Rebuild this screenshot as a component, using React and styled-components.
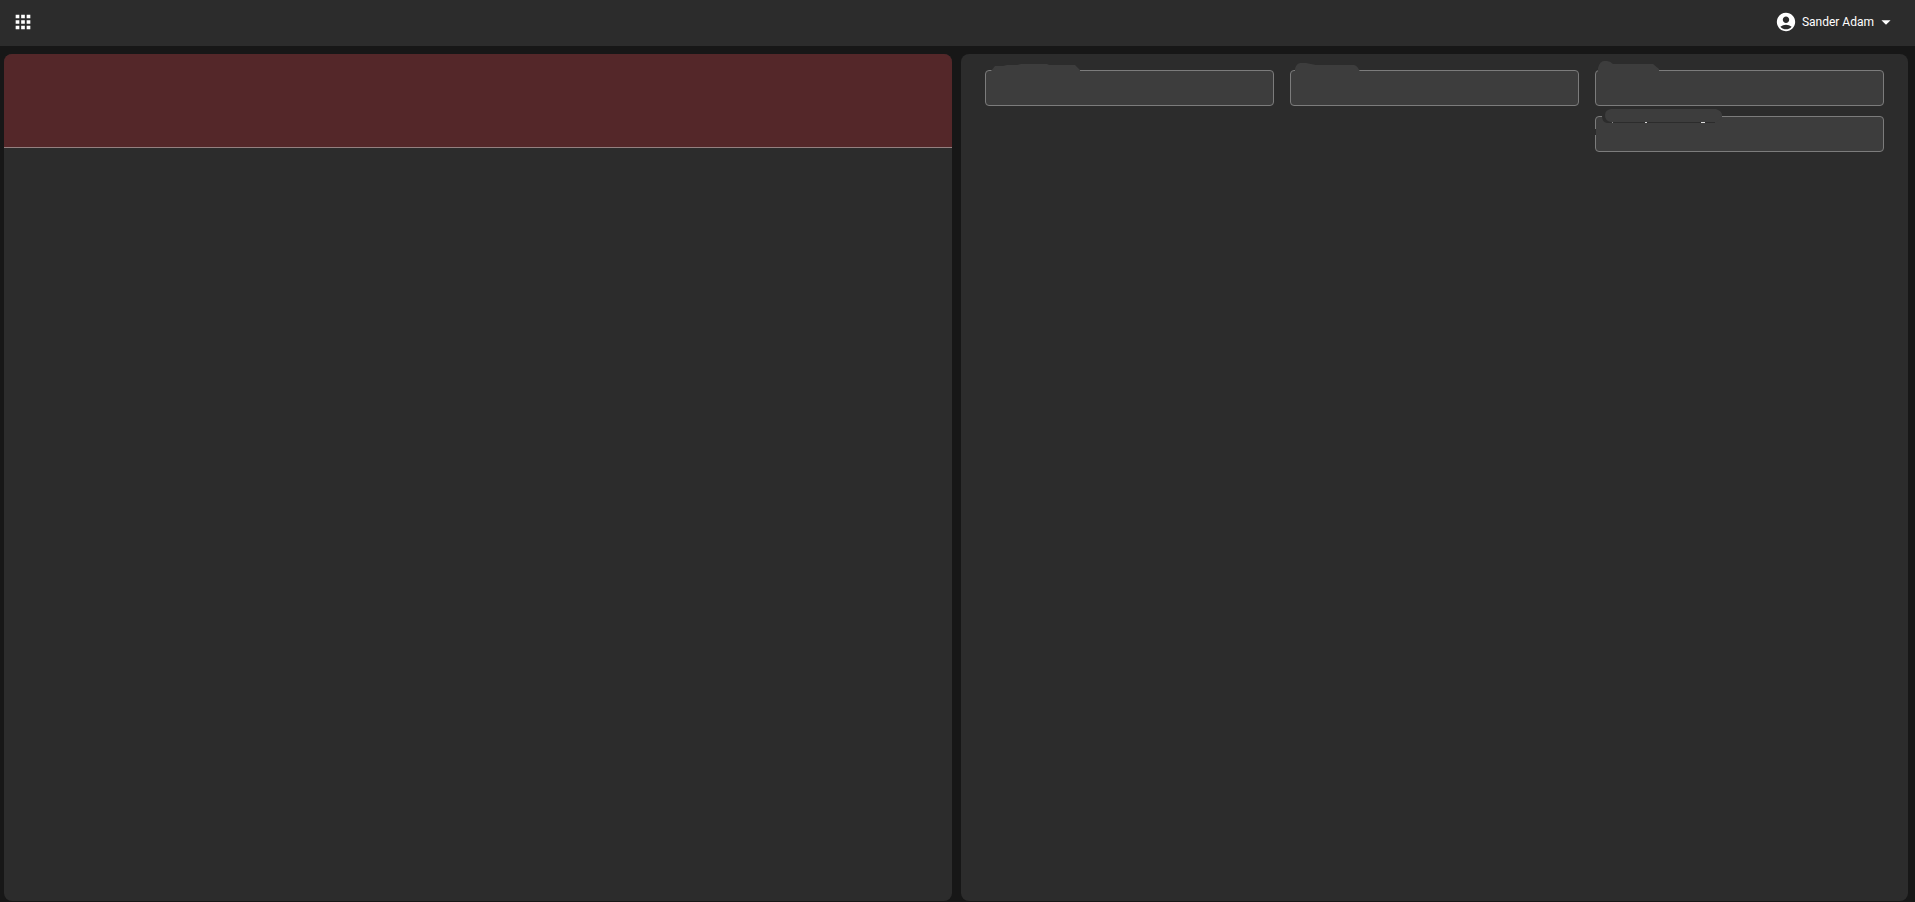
import React from 'react';
import styled, { createGlobalStyle } from 'styled-components';
import { MdApps, MdAccountCircle, MdArrowDropDown } from 'react-icons/md';

const colors = {
  page: '#171717',
  panel: '#2c2c2c',
  field: '#3d3d3d',
  border: '#7c7c7c',
  alert: '#542729',
  line: '#948080',
  text: '#ffffff',
};

const GlobalStyle = createGlobalStyle`
* {
  box-sizing: border-box;
}
body {
  margin: 0;
  background: ${colors.page};
  color: ${colors.text};
  font-family: Roboto, "Liberation Sans", sans-serif;
}
`;

const Page = styled.div`
display: flex;
flex-direction: column;
min-height: 100vh;
`;

const Header = styled.header`
display: flex;
align-items: center;
justify-content: space-between;
height: 46px;
padding: 0 18px 2px 12px;
background: ${colors.panel};
`;

const HeaderButton = styled.button`
display: flex;
align-items: center;
padding: 0;
border: 0;
background: none;
color: inherit;
font: 400 12px/22px Roboto, "Liberation Sans", sans-serif;
cursor: pointer;
`;

const UserName = styled.span`
margin: 0 1px 0 5px;
`;

const Main = styled.main`
flex: 1;
display: grid;
grid-template-columns: 1fr 1fr;
gap: 9px;
padding: 8px 7px 1px 4px;
@media only screen and (max-width: 800px) {
  grid-template-columns: 1fr;
}
`;

const Panel = styled.section`
overflow: hidden;
border-radius: 8px;
background: ${colors.panel};
`;

const Banner = styled.div`
height: 94px;
border-bottom: 1px solid ${colors.line};
background: ${colors.alert};
`;

const Form = styled.form`
display: grid;
grid-template-columns: repeat(3, 1fr);
gap: 10px 16px;
padding: 16px 24px;
`;

const FieldBox = styled.div`
position: relative;
grid-column: ${(props) => props.$column};
`;

const Input = styled.input`
display: block;
width: 100%;
height: 36px;
padding: 0 12px;
border: 1px solid ${colors.border};
border-radius: 4px;
background: ${colors.field};
color: inherit;
font: 14px/20px Roboto, "Liberation Sans", sans-serif;
outline: none;
`;

const Patch = styled.svg`
position: absolute;
top: -12px;
left: 0;
pointer-events: none;
`;

const Field = ({ name, column, children }) => (
  <FieldBox $column={column}>
    <Input type="text" name={name} aria-label={name} />
    <Patch width="140" height="48" fill={colors.field} aria-hidden="true">
      {children}
    </Patch>
  </FieldBox>
);

const App = () => (
  <Page>
    <GlobalStyle />
    <Header>
      <HeaderButton type="button" aria-label="Apps">
        <MdApps size={22} />
      </HeaderButton>
      <HeaderButton type="button">
        <MdAccountCircle size={22} />
        <UserName>Sander Adam</UserName>
        <MdArrowDropDown size={22} />
      </HeaderButton>
    </Header>
    <Main>
      <Panel>
        <Banner />
      </Panel>
      <Panel>
        <Form>
          <Field name="first" column={1}>
            <path d="M6 14V13L10 8L18 8L22 7H32L36 6H62L64 7H90L95 12V14Z" />
          </Field>
          <Field name="second" column={2}>
            <path d="M5 14V11Q6 6 10 5H16L26 7H64Q68 8 70 14Z" />
          </Field>
          <Field name="third" column={3}>
            <path d="M3 14V10Q5 3 9 3H12Q15 3 18 6H58L64 11V14Z" />
          </Field>
          <Field name="fourth" column={3}>
            <path fill={colors.panel} d="M7 12H18V19H12Q7 18 7 12Z" />
            <path fill={colors.panel} d="M0 25H1V31H0ZM16 18H120V19H16Z" />
            <path d="M16 5H121Q127 7 127 11V14L121 18H16Q10 17 10 11Q10 6 16 5Z" />
            <path fill="#dddddd" d="M50 18H52V19H50ZM106 18H110V19H106Z" />
            <path fill="#8a8a8a" d="M17 18H18V19H17Z" />
          </Field>
        </Form>
      </Panel>
    </Main>
  </Page>
);

export default App;
